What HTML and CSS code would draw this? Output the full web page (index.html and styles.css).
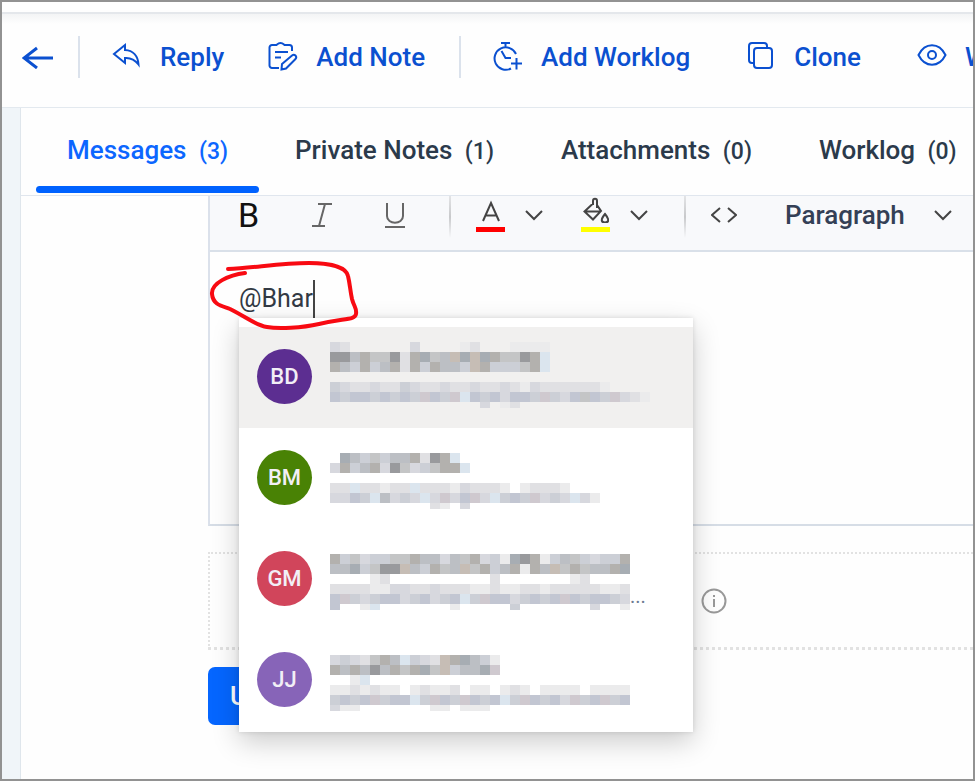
FILE: index.html
```html
<!DOCTYPE html>
<html lang="en">
<head>
  <meta charset="UTF-8">
  <title>Request conversation</title>
  <link rel="stylesheet" href="styles.css">
</head>
<body>
  <div class="top-strip"></div>

  <header class="actions">
    <button type="button" class="back" aria-label="Back">
      <svg width="32" height="24" viewBox="0 0 32 24"><path d="M31 13H2M15 3L2 13l13 10" stroke-width="3"/></svg>
    </button>
    <span class="divider"></span>
    <div class="action-group">
      <button type="button" class="action">
        <svg width="30" height="30" viewBox="0 0 30 30"><path d="M13 3L2 12l11 9v-5c6-.5 10 2 13.500 6.500C26 14 21 8.500 13 8z"/></svg>
        Reply
      </button>
      <button type="button" class="action">
        <svg width="30" height="30" viewBox="0 0 30 30"><path d="M11 26H4a2.500 2.500 0 0 1-2.500-2.500v-18A2.500 2.500 0 0 1 4 3h4c1 0 1.500-2 4.500-2S16 3 17 3h4.500A2.500 2.500 0 0 1 24 5.500V9M7 10h13M7 15.500h6M14 22L24 13.500c2.500-2 5.500 1 3.500 3.500L18 26.500l-4.500 1z"/></svg>
        Add Note
      </button>
    </div>
    <span class="divider"></span>
    <div class="action-group wide">
      <button type="button" class="action">
        <svg width="30" height="30" viewBox="0 0 30 30"><path d="M8 1h9M12.500 1v5M23 12A11.200 11.200 0 1 0 18 26.500M8.500 9l4 7H18M23.500 16v11.500M18 21.500h11"/></svg>
        Add Worklog
      </button>
      <button type="button" class="action">
        <svg width="30" height="30" viewBox="0 0 30 30"><rect x="8" y="6" width="18" height="20" rx="3"/><path d="M8 21H6a3 3 0 0 1-3-3V4a3 3 0 0 1 3-3h12a3 3 0 0 1 3 3v2"/></svg>
        Clone
      </button>
      <button type="button" class="action">
        <svg width="30" height="30" viewBox="0 0 30 30"><path d="M1.500 13C8 0 22 0 28.500 13 22 26 8 26 1.500 13z"/><circle cx="15" cy="13" r="4"/></svg>
        Watch
      </button>
    </div>
  </header>

  <main class="page">
    <div class="panel">
      <nav class="tabs">
        <a class="tab active" href="#messages">Messages <span class="count">(3)</span></a>
        <a class="tab" href="#notes">Private Notes <span class="count">(1)</span></a>
        <a class="tab" href="#attachments">Attachments <span class="count">(0)</span></a>
        <a class="tab" href="#worklog">Worklog <span class="count">(0)</span></a>
      </nav>

      <form class="reply-form">
        <div class="editor">
          <div class="toolbar">
            <button type="button" class="tool bold" aria-label="Bold">B</button>
            <button type="button" class="tool" aria-label="Italic">
              <svg width="20" height="26" viewBox="0 0 20 26"><path d="M6 2h14M0 24h13M13 2L7 24"/></svg>
            </button>
            <button type="button" class="tool" aria-label="Underline">
              <svg width="20" height="26" viewBox="0 0 20 26"><path d="M2 1v13c0 9 16 9 16 0V1M0 25h20"/></svg>
            </button>
            <span class="fade"></span>
            <div class="tool-group">
              <button type="button" class="color red" aria-label="Text color">
                <svg width="26" height="26" viewBox="0 0 26 26"><path d="M5 24L13 6l8 18M8 18.500h10"/></svg>
              </button>
              <button type="button" class="drop" aria-label="Text color options">
                <svg width="20" height="12" viewBox="0 0 20 12"><path d="M2 2l8 8 8-8"/></svg>
              </button>
            </div>
            <div class="tool-group">
              <button type="button" class="color yellow" aria-label="Highlight color">
                <svg width="26" height="26" viewBox="0 0 26 26"><path d="M10 8V4c0-3 4-3 4 0v7M10 6.500L1.500 14.500 10 22.500 18 14l-4-6M1.500 14.500H18M22 17c-5 6-3.500 8.500 0 8.500s5-2.500 0-8.500z"/></svg>
              </button>
              <button type="button" class="drop" aria-label="Highlight color options">
                <svg width="20" height="12" viewBox="0 0 20 12"><path d="M2 2l8 8 8-8"/></svg>
              </button>
            </div>
            <span class="fade"></span>
            <button type="button" class="code" aria-label="Source code">
              <svg width="26" height="16" viewBox="0 0 26 16"><path d="M9 1L1 8l8 7M17 1l8 7-8 7"/></svg>
            </button>
            <div class="format">
              <select aria-label="Block format">
                <option>Paragraph</option>
              </select>
              <svg width="20" height="12" viewBox="0 0 20 12"><path d="M2 2l8 8 8-8"/></svg>
            </div>
          </div>

          <div class="editor-body">
            <div class="mention">
              <textarea class="message" rows="1" aria-label="Message">@Bhar</textarea>
              <span class="caret"></span>
              <ul class="people">
                <li><button type="button" class="person selected">
                  <span class="avatar purple">BD</span>
                  <svg class="mosaic" data-person="0" width="320" height="70"></svg>
                </button></li>
                <li><button type="button" class="person">
                  <span class="avatar green">BM</span>
                  <svg class="mosaic" data-person="1" width="280" height="70"></svg>
                </button></li>
                <li><button type="button" class="person">
                  <span class="avatar rose">GM</span>
                  <svg class="mosaic" data-person="2" width="300" height="70"></svg>
                  <span class="more">...</span>
                </button></li>
                <li><button type="button" class="person">
                  <span class="avatar violet">JJ</span>
                  <svg class="mosaic" data-person="3" width="300" height="70"></svg>
                </button></li>
              </ul>
              <svg class="pen" width="152" height="74" viewBox="208 258 152 74"><path d="M228 269c26-1 52-6 81-6 21 0 37 4 39 13 2 8 2 14 4 23 2 8 5 9 4 15-1 6-11 4-37 10-17 4-41 5-52 3-12-2-19-9-37-18-8-3-17-4-18-15-1-11 17-19 33-21"/></svg>
            </div>
          </div>
        </div>

        <div class="dropzone">
          <button type="button" class="info" aria-label="Attachment information">
            <svg width="26" height="26" viewBox="0 0 26 26"><circle cx="13" cy="13" r="11.500"/><path d="M13 11v8M13 7v2"/></svg>
          </button>
        </div>

        <button type="submit" class="submit">Update</button>
      </form>
    </div>
  </main>

  <script src="mosaic.js"></script>
</body>
</html>
```
FILE: styles.css
```css
* {
  box-sizing: border-box;
}
body {
  display: flex;
  flex-direction: column;
  min-height: 100vh;
  margin: 0;
  border: 2px solid #929292;
  background: #fefefe;
  font-family: Roboto, sans-serif;
  font-size: 26px;
  color: #2b3a4b;
  overflow: hidden;
}
button {
  padding: 0;
  border: 0;
  background: none;
  color: inherit;
  font: inherit;
  cursor: pointer;
}
svg {
  display: block;
  flex: none;
  fill: none;
  stroke: currentColor;
  stroke-width: 2;
}

/* action bar */
.top-strip {
  height: 12px;
  border-bottom: 2px solid #e4e7eb;
}
.actions {
  display: flex;
  align-items: center;
  padding: 22px 0 29px 20px;
  border-bottom: 1px solid #e3e9ef;
  background: linear-gradient(#f3f4f5, #fefefe 10px);
  color: #0b50d0;
  font-weight: 500;
  line-height: 42px;
  white-space: nowrap;
  overflow: hidden;
}
.back {
  margin-right: 24px;
}
.divider {
  flex: none;
  width: 2px;
  height: 42px;
  margin-right: 32px;
  background: #dbe2ec;
}
.action-group {
  display: flex;
  gap: 44px;
  margin-right: 34px;
}
.action-group.wide {
  gap: 56px;
}
.action {
  display: flex;
  align-items: center;
  gap: 18px;
}

/* tabs */
.page {
  display: flex;
  flex: 1;
  padding-left: 18px;
  background: #f0f5f9;
}
.panel {
  flex: 1;
  min-width: 0;
  border-left: 1px solid #dfe6ec;
  background: #fefefe;
  overflow: hidden;
}
.tabs {
  display: flex;
  gap: 5px;
  padding-left: 15px;
  border-bottom: 1px solid #e0e6ee;
  white-space: nowrap;
}
.tab {
  padding: 22px 31px 18px;
  border-bottom: 5px solid transparent;
  color: inherit;
  font-weight: 500;
  line-height: 40px;
  text-decoration: none;
}
.tab.active {
  position: relative;
  color: #0c66ff;
}
.tab.active::after {
  content: "";
  position: absolute;
  left: 0;
  right: 0;
  bottom: -3px;
  height: 7px;
  border-radius: 4px;
  background: #0062ff;
}
.count {
  margin-left: 6px;
  font-size: 23px;
}

/* editor */
.reply-form {
  padding-left: 187px;
}
.editor {
  border-left: 2px solid #dbe1eb;
  border-bottom: 2px solid #d6dde6;
}
.toolbar {
  display: flex;
  align-items: flex-start;
  height: 56px;
  padding-left: 2px;
  border-bottom: 2px solid #d9e0e9;
  background: #f8f9fb;
  color: #444;
}
.tool {
  display: flex;
  justify-content: center;
  align-items: center;
  width: 73px;
  height: 37px;
  color: #666;
}
.bold {
  color: #111;
  font-size: 34px;
}
.fade {
  width: 2px;
  height: 42px;
  margin: 0 25px 0 18px;
  background: linear-gradient(#e3e4e6, #c8c9cb, #f8f9fb);
}
.tool-group {
  display: flex;
  align-items: center;
  gap: 19px;
  height: 37px;
}
.tool-group + .tool-group {
  margin-left: 37px;
  margin-right: 17px;
}
.color {
  display: flex;
  justify-content: center;
  width: 29px;
  height: 35px;
  border-bottom: 5px solid #f00;
}
.color.yellow {
  border-bottom-color: #ff0;
}
.code {
  display: flex;
  align-items: center;
  height: 37px;
}
.format {
  display: flex;
  align-items: center;
  gap: 28px;
  height: 37px;
  margin-left: 48px;
}
.format select {
  appearance: none;
  padding: 0;
  border: 0;
  background: none;
  color: #344056;
  font: inherit;
  font-weight: 500;
}
.editor-body {
  min-height: 272px;
  padding: 28px 29px;
}
.mention {
  display: flex;
  position: relative;
}
.message {
  field-sizing: content;
  padding: 0;
  border: 0;
  outline: 0;
  background: none;
  color: #333a44;
  font-family: inherit;
  font-size: 25px;
  line-height: 38px;
  resize: none;
  overflow: hidden;
}
.caret {
  width: 2px;
  background: #444;
}
.pen {
  position: absolute;
  left: -31px;
  top: -22px;
  color: #f80a12;
  stroke-width: 4;
  stroke-linecap: round;
  pointer-events: none;
}

/* mention list */
.people {
  position: absolute;
  left: 0;
  top: 100%;
  width: 454px;
  margin: 0;
  padding: 9px 0 1px;
  background: #fff;
  box-shadow: 0 10px 26px rgba(0, 0, 0, 0.2), 0 0 5px rgba(0, 0, 0, 0.12);
  list-style: none;
}
.person {
  display: flex;
  align-items: center;
  width: 100%;
  height: 101px;
  padding: 0 18px 2px;
}
.person.selected {
  background: #f1f0ef;
}
.avatar {
  flex: none;
  width: 55px;
  margin-right: 18px;
  border-radius: 50%;
  color: #f2eff6;
  font-size: 22px;
  font-weight: 500;
  line-height: 55px;
}
.purple {
  background: #5c2e91;
}
.green {
  background: #498205;
}
.rose {
  background: #d1455b;
}
.violet {
  background: #8764b8;
}
.mosaic {
  stroke: none;
}
.more {
  align-self: flex-end;
  margin-bottom: 20px;
  color: #6d7b92;
  font-size: 20px;
}

/* footer */
.dropzone {
  display: flex;
  align-items: center;
  height: 98px;
  margin-top: 26px;
  padding-left: 491px;
  border: 2px dotted #e2e2e2;
  border-right: 0;
  border-bottom-width: 3px;
}
.info {
  color: #999;
}
.submit {
  margin-top: 17px;
  padding: 0 22px;
  border-radius: 7px;
  background: #0566ff;
  color: #fff;
  font-weight: 500;
  line-height: 58px;
}
```
FILE: mosaic.js
```js
// Redacted names and addresses: one character per 10px cell
const SHADES = {
  1: '#ebebec', 2: '#e0e0e3', 3: '#d7d8de', 4: '#cccfd6', 5: '#c4c5c6',
  6: '#bcbfc4', 7: '#b3b1ae', 8: '#a7adb3', 9: '#999a9d',
  t: '#c6bdb5', b: '#dbe5ee', p: '#cfc9cf', l: '#c2c6d2'
};

const PEOPLE = [
  [
    '32......3....12...1111',
    '996755927856t8t875597b',
    '76474672747664t744457b',
    '',
    '4322322432232232232132222221',
    'l4ll4l4l4pl4pbl4l3ll4p43l5l4p321',
    '...............3.12'
  ],
  [
    '',
    '.86454667297b',
    '3746739534577b',
    '',
    '22b22122b222132221.12221',
    '33l4b6343b3p3lp3b4l4p343b31',
    '..........21.3'
  ],
  [
    '',
    '7453445576636573418971465434475',
    '6684599t64756t57467176t57566783',
    '....12..........2.......12',
    '222211332232221121122122222112',
    'lp434ll34l34lb4pll34l4lpl4ll43',
    'l..1b.......1.....4.......3..1'
  ],
  [
    '',
    '3432576b432t78641',
    '76769675785t4668p',
    '..1b',
    '1121211.12112.11.121.1111.1111',
    '4l4lp4llb4pl4pl4lb4pl4l3p4lp4l',
    '311.......11.111'
  ]
];

document.querySelectorAll('.mosaic').forEach(function(svg) {
  PEOPLE[svg.dataset.person].forEach(function(row, y) {
    [...row].forEach(function(cell, x) {
      if (!SHADES[cell]) return;
      const rect = document.createElementNS('http://www.w3.org/2000/svg', 'rect');
      rect.setAttribute('x', x * 10);
      rect.setAttribute('y', y * 10);
      rect.setAttribute('width', 10);
      rect.setAttribute('height', y === 6 ? 6 : 10);
      rect.setAttribute('fill', SHADES[cell]);
      svg.appendChild(rect);
    });
  });
});
```
